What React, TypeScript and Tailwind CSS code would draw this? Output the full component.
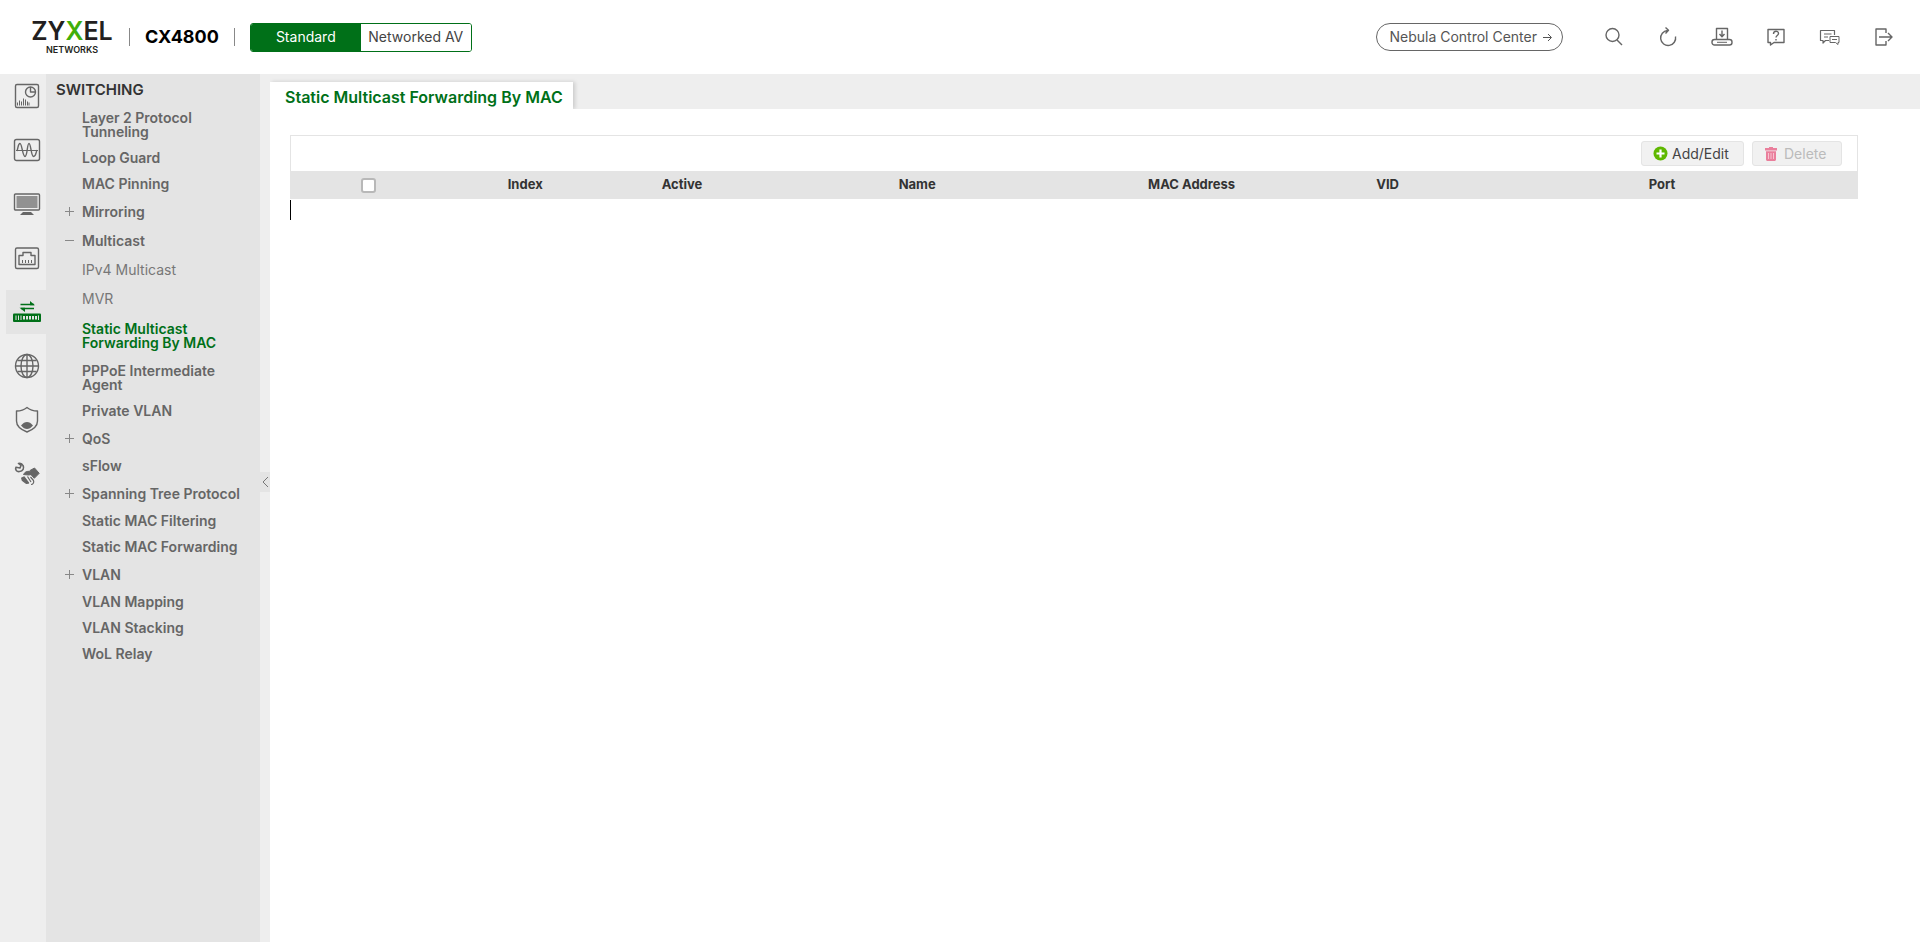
import { ReactNode } from "react";

type MenuItem = {
  label: ReactNode;
  sign?: "+" | "-";
  kind?: "sub" | "active";
  height: string;
};

const menuItems: MenuItem[] = [
  { label: <>Layer 2 Protocol<br />Tunneling</>, height: "h-10" },
  { label: "Loop Guard", height: "h-[26px]" },
  { label: "MAC Pinning", height: "h-[26px]" },
  { label: "Mirroring", sign: "+", height: "h-[29px]" },
  { label: "Multicast", sign: "-", height: "h-[29px]" },
  { label: "IPv4 Multicast", kind: "sub", height: "h-[29px]" },
  { label: "MVR", kind: "sub", height: "h-[30px]" },
  { label: <>Static Multicast<br />Forwarding By MAC</>, kind: "active", height: "h-11" },
  { label: <>PPPoE Intermediate<br />Agent</>, height: "h-10" },
  { label: "Private VLAN", height: "h-[26px]" },
  { label: "QoS", sign: "+", height: "h-[29px]" },
  { label: "sFlow", height: "h-[26px]" },
  { label: "Spanning Tree Protocol", sign: "+", height: "h-[29px]" },
  { label: "Static MAC Filtering", height: "h-[26px]" },
  { label: "Static MAC Forwarding", height: "h-[26px]" },
  { label: "VLAN", sign: "+", height: "h-[29px]" },
  { label: "VLAN Mapping", height: "h-[26px]" },
  { label: "VLAN Stacking", height: "h-[26px]" },
  { label: "WoL Relay", height: "h-[26px]" },
];

const itemStyles = {
  top: "font-semibold text-[#666]",
  sub: "text-[#777]",
  active: "font-semibold text-[#007018]",
};

function Icon(props: { size?: number; children: ReactNode }) {
  const size = props.size ?? 28;
  return (
    <svg
      width={size}
      height={size}
      viewBox={`0 0 ${size} ${size}`}
      fill="none"
      stroke="currentColor"
      strokeWidth="1.4"
      strokeLinejoin="round"
      aria-hidden="true"
    >
      {props.children}
    </svg>
  );
}

const railItems = [
  {
    name: "Dashboard",
    icon: (
      <Icon>
        <rect x="2.5" y="2.5" width="23" height="23" rx="1.5" />
        <circle cx="17.5" cy="10" r="5" />
        <path d="M17.5 5v5h5" />
        <path d="M4.5 23.5v-3M6.5 23.5v-5M8.5 23.5v-4M10.5 23.5v-7M12.5 23.5v-6M14.5 23.5v-4M16 23.5v-3" strokeWidth="1" />
      </Icon>
    ),
  },
  {
    name: "Monitor",
    icon: (
      <Icon>
        <rect x="1.5" y="3.5" width="25" height="21" rx="2" />
        <path d="M3 14.5h22" strokeWidth="1" />
        <path d="M4 15c1-2 1-7.500 3-7.500s2.500 13 5 13 2-13 4-13 2 13 4.500 13S23 16 24 14" />
      </Icon>
    ),
  },
  {
    name: "System",
    icon: (
      <Icon>
        <rect x="1.5" y="4" width="25" height="16" rx="1" />
        <rect x="3.5" y="6" width="21" height="12" fill="#919191" stroke="none" />
        <path d="M10 22h8l3 3H7z" fill="currentColor" stroke="none" />
      </Icon>
    ),
  },
  {
    name: "Port",
    icon: (
      <Icon>
        <rect x="2.5" y="4" width="23" height="20.5" rx="1.5" />
        <path d="M6 20.5v-9h4v-3h8v3h4v9z" />
        <path d="M9.5 19v-3M12.5 19v-3M15.5 19v-3M18.5 19v-3" strokeWidth="1" />
      </Icon>
    ),
  },
  {
    name: "Switching",
    active: true,
    icon: (
      <Icon>
        <path d="M7.5 6.5H21M8 10.500h13" />
        <path d="M17 3l5 4.200h-5zM12 14l-5.500-4.200H12z" fill="currentColor" stroke="none" />
        <rect x="0" y="15.5" width="28" height="8.5" rx="1" fill="currentColor" stroke="none" />
        <path d="M3 17.500v4.500M5.500 17.500v4.500M8 17.500v4.500M25.500 17.500v4.500" stroke="#e4e4e4" strokeWidth="1" />
        <path d="M10 19.700h14" stroke="#e4e4e4" strokeWidth="3.6" strokeDasharray="2 1" />
      </Icon>
    ),
  },
  {
    name: "Networking",
    icon: (
      <Icon>
        <circle cx="14" cy="14" r="11.5" />
        <ellipse cx="14" cy="14" rx="6" ry="11.5" />
        <path d="M14 2.500v23M2.500 14h23M4.500 8.500h19M4.500 19.500h19" />
      </Icon>
    ),
  },
  {
    name: "Security",
    icon: (
      <Icon>
        <path d="M14 1.500c3 2.500 6.500 3.500 10.500 3.500v10c0 5-4 8.500-10.500 11C7.500 23.500 3.500 20 3.500 15V5C7.500 5 11 4 14 1.500z" />
        <path d="M8 19.500c2-2.500 4-3.500 6-3.500s4 1 6 3.500c-2 2.500-4 3.500-6 3.500s-4-1-6-3.500z" fill="currentColor" stroke="none" />
      </Icon>
    ),
  },
  {
    name: "Maintenance",
    icon: (
      <Icon>
        <path d="M5.500 3.500L8 5.500 7 8 3 7.200C1.800 9.500 3.800 12 6.500 11.500 10 11.500 11.500 8 10 5.500 9 3.500 7.500 3 5.500 3.500z" strokeWidth="1.6" />
        <path d="M10.500 14.500c1.500-3 3.500-3.200 6-3.200l2 3.200-3 .5z" fill="currentColor" strokeWidth="1" />
        <path d="M17 10.500L21.500 8l4.700 5.300-4.900 5-3.300-3.600z" fill="currentColor" strokeWidth="1" />
        <path d="M8.800 18.200l2.200-1.200 4.500 6-2.300.2-3.700-2.700z" fill="currentColor" />
        <path d="M14.500 16.500l3.500 5.500M17.500 17l3 3.500c.8 2-.5 4-2.500 4" strokeWidth="1.2" />
      </Icon>
    ),
  },
];

const actions = [
  {
    name: "Search",
    icon: (
      <Icon size={22}>
        <circle cx="9.5" cy="9" r="6.5" />
        <path d="M14 14l5 5" />
      </Icon>
    ),
  },
  {
    name: "Refresh",
    icon: (
      <Icon size={22}>
        <path d="M10.500 4.500a7.500 7.500 0 1 0 8 6M8.500 1.500l3 2.800-3 3.200" />
      </Icon>
    ),
  },
  {
    name: "Save",
    icon: (
      <Icon size={22}>
        <path d="M5.500 13V2.500h11V13M11 4.500v6M8.500 8l2.500 2.700L13.500 8" />
        <rect x="1" y="13.5" width="20" height="5.5" rx="2.5" />
        <path d="M6 16.300h10" strokeWidth="1" />
      </Icon>
    ),
  },
  {
    name: "Help",
    icon: (
      <Icon size={22}>
        <path d="M3 3.500h16v13H9L5.500 19v-2.500H3z" />
        <path d="M8.500 8c0-3.500 5-3.500 5-.5 0 2-2.500 2-2.500 4M11 13v1.500" />
      </Icon>
    ),
  },
  {
    name: "Community",
    icon: (
      <Icon size={22}>
        <path d="M10 14.500H6.500L4 17v-2.500H1.500v-10h14V9M5 8h7.500M5 11h4" strokeWidth="1.2" />
        <path d="M11 10.500h9v6h-1v2l-2.500-2H11zM13 13.500h5" strokeWidth="1" />
      </Icon>
    ),
  },
  {
    name: "Logout",
    icon: (
      <Icon size={22}>
        <path d="M13 7V3H3v16h10v-4M6 11h12.500M15 7l4 4-4 4" />
      </Icon>
    ),
  },
];

const columns = [
  { label: "Index", width: "w-[10%]" },
  { label: "Active", width: "w-[10%]" },
  { label: "Name", width: "w-[20%]" },
  { label: "MAC Address", width: "w-[15%]" },
  { label: "VID", width: "w-[10%]" },
  { label: "Port", width: "w-[25%]" },
];

function Header() {
  return (
    <header className="flex h-[74px] shrink-0 items-center bg-white pr-[25px] pl-[30px]">
      <a href="#" className="flex w-[84px] flex-col items-center gap-px text-[#231f20]">
        <span className="text-[25px] leading-6 font-semibold">
          ZY<span className="text-[#3fae0a]">X</span>EL
        </span>
        <span className="text-[9px] leading-3 font-semibold">NETWORKS</span>
      </a>
      <span className="ml-[15px] h-[18px] w-px bg-[#888]" />
      <h1 className="mx-[15px] text-lg font-bold text-black">CX4800</h1>
      <span className="h-[18px] w-px bg-[#888]" />
      <div className="ml-[15px] flex h-[29px] overflow-hidden rounded-[3px] border border-[#007018] text-sm">
        <button className="w-[110px] bg-[#007018] text-white">Standard</button>
        <button className="w-[110px] bg-white text-[#444]">Networked AV</button>
      </div>
      <a
        href="#"
        className="mr-10 ml-auto flex h-7 items-center gap-1.5 rounded-full border border-[#666] pr-2.5 pl-3 text-sm text-[#555]"
      >
        Nebula Control Center
        <svg width="9" height="9" viewBox="0 0 9 9" fill="none" stroke="currentColor" aria-hidden="true">
          <path d="M0 4.500h8M5 1l3.500 3.500L5 8" />
        </svg>
      </a>
      <div className="flex gap-8 text-[#666]">
        {actions.map((action) => (
          <button key={action.name} aria-label={action.name}>
            {action.icon}
          </button>
        ))}
      </div>
    </header>
  );
}

function Rail() {
  return (
    <nav className="flex w-[46px] shrink-0 flex-col gap-2.5 pl-1.5">
      {railItems.map((item) => (
        <button
          key={item.name}
          aria-label={item.name}
          className={`flex h-11 items-center pl-[7px] ${item.active ? "bg-[#e4e4e4] text-[#007018]" : "text-[#666]"}`}
        >
          {item.icon}
        </button>
      ))}
    </nav>
  );
}

function SideMenu() {
  return (
    <nav className="w-[214px] shrink-0 bg-[#e4e4e4]">
      <h2 className="h-[31px] pl-2.5 text-[15px] leading-[31px] font-semibold text-[#333]">SWITCHING</h2>
      <ul className="text-sm leading-[14px]">
        {menuItems.map((item, i) => (
          <li key={i}>
            <a
              href="#"
              className={`flex items-center gap-2 pl-[18px] ${item.height} ${itemStyles[item.kind ?? "top"]}`}
            >
              <svg width="10" height="10" viewBox="0 0 10 10" stroke="#888" aria-hidden="true">
                {item.sign && <path d="M1 4.500h9" />}
                {item.sign === "+" && <path d="M5.500 0v9" />}
              </svg>
              <span>{item.label}</span>
            </a>
          </li>
        ))}
      </ul>
    </nav>
  );
}

function Toolbar() {
  return (
    <div className="flex h-9 items-center justify-end gap-2 border border-b-0 border-[#e4e4e4] pr-[15px]">
      <button className="flex h-[25px] w-[103px] items-center gap-1 rounded-[3px] border border-[#e4e4e4] bg-[#f1f1f1] pl-[11px] text-sm text-[#444]">
        <svg width="15" height="15" viewBox="0 0 15 15" aria-hidden="true">
          <circle cx="7.5" cy="7.5" r="7" fill="#5fb800" />
          <path d="M7.500 3.500v8M3.500 7.500h8" stroke="#fff" strokeWidth="2.2" />
        </svg>
        Add/Edit
      </button>
      <button
        disabled
        className="flex h-[25px] w-[90px] items-center gap-[7px] rounded-[3px] border border-[#e4e4e4] bg-[#f1f1f1] pl-3 text-sm text-[#bbb]"
      >
        <svg width="12" height="14" viewBox="0 0 12 14" fill="#ea7f9c" aria-hidden="true">
          <path d="M4 0h4v1h4v2.500H0V1h4zM1 4.300h10V13l-1 1H2l-1-1z" />
          <path d="M3.500 6v6M6 6v6M8.500 6v6" stroke="#f6c3d0" />
        </svg>
        Delete
      </button>
    </div>
  );
}

function ForwardingTable() {
  return (
    <table className="w-full table-fixed text-[13px] text-[#333]">
      <thead>
        <tr className="h-7 bg-[#e4e4e4]">
          <th scope="col" className="w-[10%]">
            <input
              type="checkbox"
              aria-label="Select all"
              className="mx-auto block size-[15px] appearance-none rounded-[3px] border-2 border-[#b8b8b8] bg-white"
            />
          </th>
          {columns.map((col) => (
            <th key={col.label} scope="col" className={`font-bold ${col.width}`}>
              {col.label}
            </th>
          ))}
        </tr>
      </thead>
    </table>
  );
}

export default function App() {
  return (
    <div className="flex min-h-screen flex-col bg-white font-['Century_Gothic','Inter',sans-serif]">
      <Header />
      <div className="flex flex-1 bg-[#eee]">
        <Rail />
        <SideMenu />
        <div className="w-2.5 shrink-0 pt-[398px]">
          <button aria-label="Collapse menu" className="flex h-5 w-full items-center justify-center bg-[#e4e4e4]">
            <svg width="8" height="12" viewBox="0 0 8 12" fill="none" stroke="#777" aria-hidden="true">
              <path d="M7 1L2 6l5 5" />
            </svg>
          </button>
        </div>
        <main className="flex min-w-0 flex-1 flex-col">
          <div className="flex h-[35px] items-end overflow-hidden">
            <h2 className="h-[27px] bg-white pr-2.5 pl-[15px] leading-[31px] font-semibold text-[#007018] shadow-[2px_0_4px_rgba(0,0,0,0.15)]">
              Static Multicast Forwarding By MAC
            </h2>
          </div>
          <div className="flex-1 bg-white pt-[26px] pr-[62px] pl-5">
            <Toolbar />
            <ForwardingTable />
            <div className="mt-px h-5 border-l border-black" />
          </div>
        </main>
      </div>
    </div>
  );
}
